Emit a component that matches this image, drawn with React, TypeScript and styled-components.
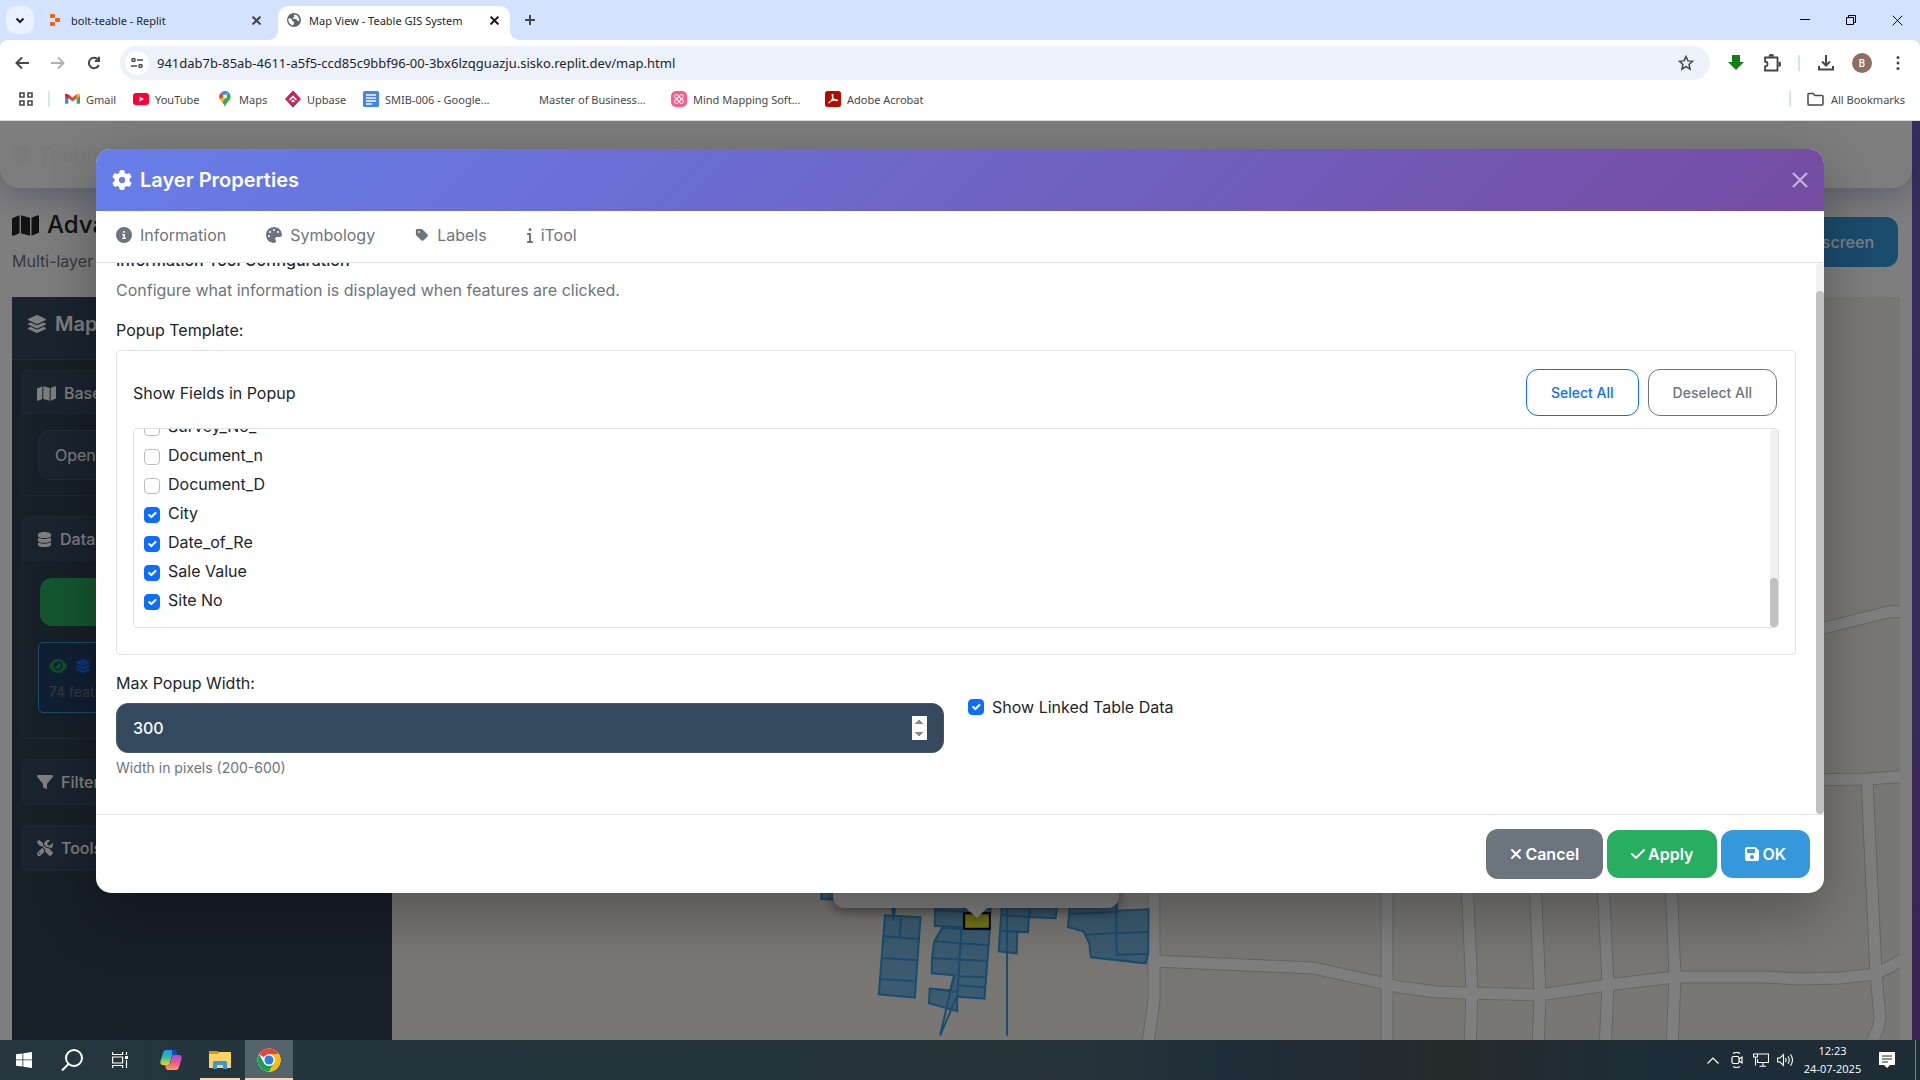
import React, { ReactNode, useLayoutEffect, useRef, useState } from "react";
import styled, { createGlobalStyle, css } from "styled-components";
import {
  FaCheck,
  FaCircleInfo,
  FaDatabase,
  FaEye,
  FaFilter,
  FaFloppyDisk,
  FaGear,
  FaInfo,
  FaLayerGroup,
  FaMap,
  FaPalette,
  FaScrewdriverWrench,
  FaTag,
  FaXmark,
} from "react-icons/fa6";

const uiFont = `"Noto Sans", "Open Sans", sans-serif`;
const appFont = `Inter, "Liberation Sans", sans-serif`;

const GlobalStyle = createGlobalStyle`
  *, *::before, *::after { box-sizing: border-box; }
  body { margin: 0; font-family: ${appFont}; font-size: 16px; color: #212529; overflow: hidden; }
  button, input, select { font: inherit; }
  button { cursor: pointer; }
  svg { display: block; flex: none; }
`;

/* ---------- window ---------- */

const Desktop = styled.div`
  display: flex;
  flex-direction: column;
  height: 100vh;
`;

const IconButton = styled.button<{ $w?: number; $h?: number; $bg?: string; $color?: string; $radius?: number }>`
  display: flex;
  align-items: center;
  justify-content: center;
  flex: none;
  width: ${(p) => p.$w ?? 24}px;
  height: ${(p) => p.$h ?? 24}px;
  padding: 0;
  border: 0;
  border-radius: ${(p) => p.$radius ?? 12}px;
  background: ${(p) => p.$bg ?? "transparent"};
  color: ${(p) => p.$color ?? "#474747"};
`;

/* ---------- browser tabs ---------- */

const TabStrip = styled.header`
  display: flex;
  align-items: center;
  height: 40px;
  flex: none;
  padding-left: 6px;
  background: #d3e3fd;
  font-family: ${uiFont};
  font-size: 11px;
`;

const BrowserTab = styled.div<{ $active?: boolean }>`
  position: relative;
  display: flex;
  align-items: center;
  gap: 8px;
  align-self: flex-end;
  height: 34px;
  width: 232px;
  margin-left: 6px;
  padding: 0 4px 6px 9px;
  border-radius: 10px 10px 0 0;
  color: #1f1f1f;
  ${(p) =>
    p.$active &&
    css`
      background: #fff;
      &::before,
      &::after {
        content: "";
        position: absolute;
        bottom: 0;
        width: 10px;
        height: 10px;
      }
      &::before {
        left: -10px;
        background: radial-gradient(circle at 0 0, transparent 10px, #fff 10px);
      }
      &::after {
        right: -10px;
        background: radial-gradient(circle at 100% 0, transparent 10px, #fff 10px);
      }
    `}
`;

const TabTitle = styled.span`
  flex: 1;
  white-space: nowrap;
`;

const WindowControls = styled.div`
  display: flex;
  margin-left: auto;
`;

const ToolbarWrap = styled.div`
  flex: none;
  background: #d3e3fd;
`;

const Toolbar = styled.div`
  display: flex;
  align-items: center;
  height: 46px;
  padding: 0 10px;
  background: #fff;
  border-radius: 8px 8px 0 0;
`;

const NavButtons = styled.div`
  display: flex;
  gap: 12px;
  margin-right: 14px;
`;

const Omnibox = styled.label`
  display: flex;
  align-items: center;
  flex: 1;
  gap: 8px;
  height: 34px;
  padding: 0 12px 0 5px;
  border-radius: 17px;
  background: #ecf1fa;
  font-family: ${uiFont};
`;

const UrlInput = styled.input`
  flex: 1;
  min-width: 0;
  padding: 0;
  border: 0;
  outline: 0;
  background: transparent;
  color: #1f1f1f;
  font-size: 13px;
`;

const Separator = styled.span`
  width: 2px;
  height: 16px;
  flex: none;
  background: #d3e3fd;
`;

const ToolbarActions = styled.div`
  display: flex;
  align-items: center;
  gap: 12px;
  margin-left: 14px;
  ${Separator} {
    margin: 0 2px;
  }
`;

const Avatar = styled.span`
  display: grid;
  place-items: center;
  width: 20px;
  height: 20px;
  border-radius: 50%;
  background: #8d6e63;
  color: #fff;
  font: 500 10px Roboto, sans-serif;
`;

const BookmarkBar = styled.nav`
  display: flex;
  align-items: center;
  height: 35px;
  flex: none;
  padding: 0 15px 8px 16px;
  background: #fff;
  border-bottom: 1px solid #dadce0;
  font-family: ${uiFont};
  font-size: 11px;
`;

const Bookmark = styled.a<{ $w?: number }>`
  display: flex;
  align-items: center;
  gap: 6px;
  width: ${(p) => (p.$w ? p.$w + "px" : "auto")};
  flex: none;
  color: #474747;
  text-decoration: none;
  white-space: nowrap;
`;

const BookmarkGroup = styled.div`
  display: flex;
  align-items: center;
  flex: 1;
  padding-left: 14px;
`;

const AllBookmarks = styled(Bookmark)`
  margin-left: 16px;
  gap: 7px;
`;

const IconSlot = styled.span`
  display: flex;
  justify-content: center;
  width: 16px;
  height: 16px;
`;

/* ---------- page under the dialog ---------- */

const Viewport = styled.main`
  position: relative;
  container-type: size;
  display: flex;
  flex: 1;
  min-height: 0;
  overflow: hidden;
  background: linear-gradient(135deg, #667eea, #764ba2);
`;

const Page = styled.div`
  display: flex;
  flex-direction: column;
  flex: 1;
  min-width: 0;
  margin-right: 8px;
  background: #fdfdfd;
`;

const SiteHeader = styled.div`
  display: flex;
  align-items: center;
  gap: 8px;
  height: 67px;
  flex: none;
  padding: 0 12px;
  border-radius: 0 0 20px 20px;
  background: #f9fbf9;
  box-shadow: 0 8px 32px rgba(31, 38, 135, 0.3);
  color: #f3f5f3;
  font-size: 20px;
  font-weight: 700;
`;

const PageHead = styled.div`
  display: flex;
  align-items: flex-start;
  justify-content: space-between;
  height: 109px;
  flex: none;
  padding: 22px 14px 0 12px;
`;

const PageTitle = styled.h1`
  display: flex;
  align-items: center;
  gap: 8px;
  margin: 0 0 8px;
  padding-top: 1px;
  font-size: 24px;
  line-height: 28px;
  font-weight: 500;
`;

const Lead = styled.p`
  margin: 0;
  color: #6c757d;
  line-height: 28px;
`;

const FullscreenButton = styled.button`
  margin-top: 7px;
  height: 50px;
  padding: 0 24px;
  border: 0;
  border-radius: 12px;
  background: #3498db;
  color: #fff;
  font-weight: 500;
`;

const Workspace = styled.div`
  display: flex;
  flex: 1;
  min-height: 0;
  padding: 0 12px;
`;

const Sidebar = styled.aside`
  width: 380px;
  flex: none;
  background: #2f3e50;
  color: #fff;
`;

const SidebarHead = styled.h2`
  display: flex;
  align-items: center;
  gap: 8px;
  height: 63px;
  margin: 0 0 10px;
  padding: 0 15px 8px;
  background: #34495e;
  border-bottom: 1px solid #44586b;
  font-size: 20px;
  font-weight: 600;
`;

const Card = styled.section`
  margin: 0 10px 20px;
  border: 1px solid #3f5060;
  border-radius: 5px;
`;

const CardHead = styled.h3`
  display: flex;
  align-items: center;
  gap: 8px;
  height: 44px;
  margin: 0;
  padding: 0 14px;
  background: #34495e;
  font-size: 16px;
  font-weight: 500;
`;

const CardBody = styled.div<{ $bottom?: number }>`
  display: flex;
  flex-direction: column;
  gap: 16px;
  padding: 15px 15px ${(p) => p.$bottom ?? 15}px;
`;

const LayerSelect = styled.select`
  appearance: none;
  height: 50px;
  padding: 0 16px;
  border: 1px solid #44586b;
  border-radius: 12px;
  background: #34495e;
  color: #fff;
`;

const AddButton = styled.button`
  height: 48px;
  margin: 2px 2px 0;
  border: 0;
  border-radius: 12px;
  background: #27ae60;
`;

const LayerItem = styled.div`
  height: 71px;
  padding: 14px 10px;
  border: 1px solid #3498db;
  border-radius: 5px;
  background: #223f66;
  color: #6c757d;
  font-size: 14px;
`;

const LayerIcons = styled.div`
  display: flex;
  align-items: center;
  gap: 8px;
  margin-bottom: 8px;
`;

const MapPane = styled.div`
  flex: 1;
  min-width: 0;
  overflow: hidden;
  background: #f2efe7;
`;

/* ---------- scroll area with its own slim bar ---------- */

const ScrollFrame = styled.div`
  display: flex;
  height: 100%;
`;

const ScrollContent = styled.div<{ $pad: string }>`
  flex: 1;
  min-width: 0;
  overflow-y: auto;
  scrollbar-width: none;
  padding: ${(p) => p.$pad};
`;

const ScrollTrack = styled.div`
  width: 8px;
  flex: none;
  border-radius: 4px;
  background: #f1f1f1;
`;

const ScrollThumb = styled.div`
  border-radius: 4px;
  background: #c1c1c1;
`;

const ScrollArea = ({ pad, children }: { pad: string; children: ReactNode }) => {
  const content = useRef<HTMLDivElement>(null);
  const [bar, setBar] = useState({ size: 100, top: 0 });

  const measure = () => {
    const el = content.current;
    if (!el) return;
    const scale = el.clientHeight / el.scrollHeight;
    setBar({ size: scale * el.clientHeight, top: el.scrollTop * scale });
  };

  useLayoutEffect(() => {
    const el = content.current;
    if (el) el.scrollTop = el.scrollHeight;
    measure();
  }, []);

  return (
    <ScrollFrame>
      <ScrollContent ref={content} $pad={pad} onScroll={measure}>{children}</ScrollContent>
      <ScrollTrack>
        <ScrollThumb style={{ height: bar.size, marginTop: bar.top }} />
      </ScrollTrack>
    </ScrollFrame>
  );
};

/* ---------- dialog ---------- */

const Backdrop = styled.div`
  position: absolute;
  inset: 0;
  padding-top: 28px;
  background: rgba(0, 0, 0, 0.5);
`;

const Modal = styled.div`
  width: 90%;
  margin: 0 auto;
  overflow: hidden;
  border-radius: 15px;
  background: #fff;
  box-shadow: 0 20px 60px rgba(0, 0, 0, 0.3);
`;

const ModalHead = styled.div`
  display: flex;
  align-items: center;
  justify-content: space-between;
  height: 62px;
  padding: 0 16px;
  background: linear-gradient(135deg, #667eea 0%, #764ba2 100%);
  color: #fff;
`;

const ModalTitle = styled.h2`
  display: flex;
  align-items: center;
  gap: 8px;
  margin: 0;
  font-size: 20px;
  font-weight: 600;
`;

const TabList = styled.div`
  display: flex;
  height: 52px;
  border-bottom: 1px solid #dee2e6;
`;

const PanelTab = styled.button`
  display: flex;
  align-items: center;
  gap: 8px;
  padding: 0 20px 4px;
  border: 0;
  background: none;
  color: #6c757d;
`;

const InfoGlyph = styled(FaInfo)`
  width: 6px;
  height: 16px;
`;

const ModalBody = styled.div`
  height: 60cqh;
`;

const SectionTitle = styled.h3`
  margin: 0 0 7px;
  font-size: 16px;
  line-height: 20px;
  font-weight: 500;
`;

const Hint = styled.p`
  margin: 0 0 15px;
  color: #6c757d;
  line-height: 26px;
`;

const FieldLabel = styled.label`
  display: block;
  margin-bottom: 8px;
  line-height: 24px;
`;

const FieldBox = styled.div`
  margin-bottom: 16px;
  padding: 18px 16px 26px;
  border: 1px solid #dee2e6;
  border-radius: 4px;
`;

const FieldBoxHead = styled.div`
  display: flex;
  align-items: center;
  gap: 9px;
  margin-bottom: 12px;
  padding-right: 2px;
`;

const FieldBoxTitle = styled.span`
  flex: 1;
`;

const OutlineButton = styled.button<{ $color: string }>`
  height: 47px;
  padding: 0 24px;
  border: 1px solid ${(p) => p.$color};
  border-radius: 12px;
  background: #fff;
  color: ${(p) => p.$color};
  font-size: 14px;
  font-weight: 500;
`;

const FieldList = styled.div`
  height: 200px;
  overflow: hidden;
  border: 1px solid #dee2e6;
  border-radius: 4px;
`;

const Spacer = styled.div<{ $rows: number }>`
  height: ${(p) => p.$rows * 29}px;
`;

const CheckRow = styled.label`
  display: flex;
  align-items: center;
  gap: 8px;
  height: 26px;
  margin-bottom: 3px;
`;

const Checkbox = styled.input.attrs({ type: "checkbox" })<{ $drop?: number }>`
  appearance: none;
  width: 16px;
  height: 16px;
  flex: none;
  margin: ${(p) => p.$drop ?? 0}px 0 0;
  border: 1px solid #b9bdc2;
  border-radius: 4px;
  background: #fff;
  &:checked {
    border-color: #0d6efd;
    background: #0d6efd
      url("data:image/svg+xml,%3csvg xmlns='http://www.w3.org/2000/svg' viewBox='0 0 20 20'%3e%3cpath fill='none' stroke='%23fff' stroke-linecap='round' stroke-linejoin='round' stroke-width='3' d='m6 10 3 3 6-6'/%3e%3c/svg%3e")
      center / contain no-repeat;
  }
`;

const Columns = styled.div`
  display: grid;
  grid-template-columns: 1fr 1fr;
  gap: 24px;
`;

const LinkedOption = styled.div`
  padding-top: 23px;
`;

const NumberInput = styled.input`
  display: block;
  width: 100%;
  height: 50px;
  padding: 0 16px;
  border: 1px solid #44586b;
  border-radius: 12px;
  background: #34495e;
  color: #fff;
  font-weight: 500;
  &::-webkit-inner-spin-button {
    opacity: 1;
    height: 24px;
  }
`;

const HelpText = styled.small`
  display: block;
  margin-top: 4px;
  color: #6c757d;
  font-size: 14px;
  line-height: 22px;
`;

const ModalFoot = styled.div`
  display: flex;
  align-items: center;
  justify-content: flex-end;
  gap: 4px;
  height: 79px;
  padding: 0 14px;
  border-top: 1px solid #dee2e6;
`;

const ActionButton = styled.button<{ $bg: string; $tall?: boolean; $icon: number }>`
  display: flex;
  align-items: center;
  gap: 3px;
  height: ${(p) => (p.$tall ? 50 : 48)}px;
  padding: 0 24px;
  border: 0;
  border-radius: 12px;
  background: ${(p) => p.$bg};
  color: #fff;
  font-weight: 600;
  svg {
    width: ${(p) => p.$icon}px;
    height: 16px;
  }
`;

/* ---------- taskbar ---------- */

const Taskbar = styled.footer`
  display: flex;
  align-items: center;
  height: 40px;
  flex: none;
  background: linear-gradient(90deg, #25363f 0%, #23343c 25%, #28343a 55%, #1f2d38 64%, #262a2c 76%, #1d2d37 86%, #1d2c35 100%);
  color: #fff;
`;

const TaskButton = styled.button<{ $open?: boolean; $current?: boolean }>`
  display: flex;
  align-items: center;
  justify-content: center;
  width: ${(p) => (p.$open ? 40 : 48)}px;
  height: 40px;
  margin: 0 ${(p) => (p.$open ? 5 : 0)}px;
  padding: 2px 0 0;
  border: 0;
  border-bottom: 2px solid ${(p) => (p.$open || p.$current ? "#fcd7ab" : "transparent")};
  background: ${(p) => (p.$current ? "#53626b" : "transparent")};
`;

const PinnedApps = styled.div`
  display: flex;
  margin-left: 3px;
`;

const Tray = styled.div`
  display: flex;
  align-items: center;
  margin-left: auto;
  height: 40px;
`;

const Clock = styled.time`
  width: 74px;
  padding-right: 3px;
  text-align: center;
  font-family: "Open Sans", sans-serif;
  font-size: 11px;
  line-height: 18px;
`;

const ShowDesktop = styled.span`
  width: 5px;
  height: 40px;
  margin-left: 12px;
  border-left: 1px solid #77828a;
`;

/* ---------- drawings ---------- */

const stroke = { fill: "none", stroke: "currentColor", strokeWidth: 2 } as const;

const Cross = ({ size = 8, width = 2 }) => (
  <svg width={size} height={size} viewBox="0 0 16 16" fill="none" stroke="currentColor" strokeWidth={(width * 16) / size}>
    <path d="M1 1 15 15M15 1 1 15" />
  </svg>
);

const ReplitLogo = () => (
  <svg width="14" height="14" viewBox="0 0 14 14" fill="#f26207">
    <rect x="1" y="1" width="5" height="4" rx="1" />
    <rect x="6" y="5" width="5" height="4" rx="1" />
    <rect x="1" y="9" width="5" height="4" rx="1" />
  </svg>
);

const Globe = () => (
  <svg width="14" height="14" viewBox="0 0 14 14">
    <circle cx="7" cy="7" r="7" fill="#5f6368" />
    <path d="M1.6 5.2c2-.2 3.400.8 3.400 2 0 1.200 1.600.8 2 2 .3 1-.6 1.400-.6 3.200A5.600 5.600 0 0 1 1.600 5.200zM7 1.600c-.6 1.200 1 1.600 0 2.600-.8.8-2 .4-1.200 1.400.8.9 3.600.2 4.200 1.400.5 1 1 1.400 2.300 1A5.600 5.600 0 0 0 7 1.600z" fill="#fff" />
  </svg>
);

const ChromeLogo = () => (
  <svg width="24" height="24" viewBox="0 0 48 48">
    <circle cx="24" cy="24" r="23" fill="#fff" />
    <path d="M24 1A23 23 0 0 1 44 12.500H24a11.500 11.500 0 0 0-10 5.800L4.100 12.500A23 23 0 0 1 24 1z" fill="#ea4335" />
    <path d="M44 12.500A23 23 0 0 1 23.500 47L34 29.800a11.500 11.500 0 0 0 0-11.600 11 11 0 0 0-10-5.700z" fill="#fbbc04" />
    <path d="M4.100 12.500 14 29.800a11.500 11.500 0 0 0 20 0L23.700 47A23 23 0 0 1 4.100 12.500z" fill="#1e9e4a" />
    <circle cx="24" cy="24" r="11.500" fill="#fff" />
    <circle cx="24" cy="24" r="9" fill="#2b7de9" />
  </svg>
);

const roads = [
  "M1154 880V1000L1147 1050",
  "M1154 961 1313 968 1382 983 1400 987 1437 992 1466 993 1540 995 1607 985 1675 977 1765 977 1800 979 1840 978 1876 974 1910 956",
  "M1387 880V1050",
  "M1467 880 1472 992 1470 1050",
  "M1535 880 1540 994 1538 1050",
  "M1603 880 1608 985 1605 1050",
  "M1671 880 1675 977 1672 1050",
  "M1800 780 1867 779 1910 776",
  "M1867 779 1876 974 1880 1018Q1880 1026 1872 1042",
  "M1800 634 1888 612 1910 611",
];

const parcels = [
  "M56 700H120V780L56 777Z",
  "M222 826 315 832 300 1073 206 1063Z",
  "M220 889 308 897M216 954 306 961M211 1017 302 1024M264 832 261 892",
  "M240 790 249 790 245 842Z",
  "M353 790H429L427 862 352 858Z",
  "M353 810 427 815",
  "M371 864 496 870 482 1076 411 1070 411 1114 337 1090 339 1046 392 1051 403 1006 344 1000 345 952 351 904Z",
  "M351 904 492 916M345 954 488 963M412 1009 485 1012M410 1036 484 1042M422 864 411 1070M339 1046 411 1056M403 1006 366 1187 413 1060",
  "M429 790H498V818H429Z",
  "M528 790H672L668 835 598 831 596 877 568 875 566 940 519 934Z",
  "M526 825 598 831M600 790V829M525 872 568 875M541 790V1187",
  "M706 790H827V812L911 808 910 940 903 970 760 952 756 910 741 874 700 861Z",
  "M707 822 827 816M749 884 827 879 910 876M827 790V944L908 941",
];

const MapDrawing = () => (
  <svg width="100%" height="100%" viewBox="392 297 1508 743" preserveAspectRatio="xMinYMin slice">
    <defs>
      <filter id="popupShadow" x="-20%" y="-20%" width="140%" height="140%">
        <feDropShadow dx="0" dy="3" stdDeviation="6" floodOpacity="0.45" />
      </filter>
    </defs>
    <g fill="none" stroke="#cbc9c4" strokeWidth="13">
      {roads.map((d) => <path key={d} d={d} />)}
    </g>
    <g fill="none" stroke="#fff" strokeWidth="11">
      {roads.map((d) => <path key={d} d={d} />)}
    </g>
    <g transform="translate(800 640) scale(.3827 .3333)" fill="#3498db" stroke="#3498db" strokeWidth="2">
      {parcels.map((d) => <path key={d} d={d} vectorEffect="non-scaling-stroke" fillOpacity={d.endsWith("Z") ? 0.65 : 0} />)}
      <path d="M429 820H496V866H429Z" fill="#f0f030" stroke="#000" vectorEffect="non-scaling-stroke" />
    </g>
    <g fill="#fff" filter="url(#popupShadow)">
      <rect x="833" y="700" width="286" height="208" rx="12" />
      <path d="M965 907H988L977 918Z" />
    </g>
  </svg>
);

/* ---------- sections ---------- */

const BrowserChrome = () => (
  <>
    <TabStrip>
      <IconButton $w={28} $h={28} $bg="#e9f1fe" $radius={10} aria-label="Search tabs" $color="#1f1f1f">
        <svg width="10" height="10" viewBox="0 0 10 10" {...stroke}><path d="m1.500 3.500 3.500 3.500 3.500-3.500" /></svg>
      </IconButton>
      <BrowserTab>
        <ReplitLogo />
        <TabTitle>bolt-teable - Replit</TabTitle>
        <IconButton aria-label="Close tab"><Cross size={9} /></IconButton>
      </BrowserTab>
      <BrowserTab $active>
        <Globe />
        <TabTitle>Map View - Teable GIS System</TabTitle>
        <IconButton aria-label="Close tab" $color="#1f1f1f"><Cross size={9} /></IconButton>
      </BrowserTab>
      <IconButton $w={40} aria-label="New tab">
        <svg width="12" height="12" viewBox="0 0 12 12" {...stroke}><path d="M6 1v10M1 6h10" /></svg>
      </IconButton>
      <WindowControls>
        <IconButton $w={46} $h={40} $radius={0} $color="#000" aria-label="Minimize">
          <svg width="10" height="10" viewBox="0 0 10 10" stroke="currentColor"><path d="M0 4.500h10" /></svg>
        </IconButton>
        <IconButton $w={46} $h={40} $radius={0} $color="#000" aria-label="Restore">
          <svg width="10" height="10" viewBox="0 0 10 10" fill="none" stroke="currentColor"><path d="M.5 2.500h7v7h-7zM2.500 2.500v-2h7v7h-2" /></svg>
        </IconButton>
        <IconButton $w={46} $h={40} $radius={0} $color="#000" aria-label="Close"><Cross size={11} width={1} /></IconButton>
      </WindowControls>
    </TabStrip>
    <ToolbarWrap>
      <Toolbar>
        <NavButtons>
          <IconButton aria-label="Back">
            <svg width="14" height="14" viewBox="0 0 14 14" {...stroke}><path d="M14 7H2M7 1.500 1.500 7 7 12.500" /></svg>
          </IconButton>
          <IconButton aria-label="Forward" $color="#b0b0b0">
            <svg width="14" height="14" viewBox="0 0 14 14" {...stroke}><path d="M0 7h12M7 1.500 12.500 7 7 12.500" /></svg>
          </IconButton>
          <IconButton aria-label="Reload">
            <svg width="14" height="14" viewBox="0 0 14 14" {...stroke}><path d="M11.800 9A5.200 5.200 0 1 1 11 3.600M12 .8v4.200H7.800" /></svg>
          </IconButton>
        </NavButtons>
        <Omnibox>
          <IconButton $bg="#fff" aria-label="Site information">
            <svg width="12" height="12" viewBox="0 0 12 12" fill="none" stroke="currentColor" strokeWidth="1.500"><circle cx="2.500" cy="3" r="1.600" /><path d="M6 3h6M0 9h6" /><circle cx="9.500" cy="9" r="1.600" /></svg>
          </IconButton>
          <UrlInput aria-label="Address" defaultValue="941dab7b-85ab-4611-a5f5-ccd85c9bbf96-00-3bx6lzqguazju.sisko.replit.dev/map.html" />
          <IconButton aria-label="Bookmark this page">
            <svg width="16" height="16" viewBox="0 0 16 16" fill="none" stroke="currentColor" strokeWidth="1.500"><path d="m8 1.500 1.900 4.400 4.700.4-3.600 3.100 1.100 4.700L8 11.600l-4.100 2.500L5 9.400 1.400 6.300l4.700-.4z" /></svg>
          </IconButton>
        </Omnibox>
        <ToolbarActions>
          <IconButton aria-label="Download manager">
            <svg width="16" height="16" viewBox="0 0 16 16" fill="#128012"><path d="M4 0h8v7h4l-8 8-8-8h4z" /></svg>
          </IconButton>
          <IconButton aria-label="Extensions">
            <svg width="18" height="18" viewBox="0 0 18 18" fill="none" stroke="currentColor" strokeWidth="1.800"><path d="M2 3.500h12.500v13H2v-4a2.400 2.400 0 0 0 0-5z" /><path d="M6.500 2.500a1.800 1.800 0 0 1 3.600 0M15.500 8.500a1.800 1.800 0 0 1 0 3.600" fill="currentColor" /></svg>
          </IconButton>
          <Separator />
          <IconButton aria-label="Downloads">
            <svg width="16" height="16" viewBox="0 0 16 16" {...stroke}><path d="M8 0v10M4 6.500l4 4 4-4M1 11v3.500h14V11" /></svg>
          </IconButton>
          <IconButton aria-label="Profile"><Avatar>B</Avatar></IconButton>
          <IconButton aria-label="Menu">
            <svg width="4" height="16" viewBox="0 0 4 16" fill="currentColor"><circle cx="2" cy="2.500" r="1.500" /><circle cx="2" cy="8" r="1.500" /><circle cx="2" cy="13.500" r="1.500" /></svg>
          </IconButton>
        </ToolbarActions>
      </Toolbar>
    </ToolbarWrap>
    <BookmarkBar>
      <Bookmark href="#" aria-label="Apps" $w={32}>
        <svg width="20" height="16" viewBox="0 0 20 16" fill="none" stroke="currentColor" strokeWidth="1.600"><path d="M4 2h4v4H4zM12 2h4v4h-4zM4 10h4v4H4zM12 10h4v4h-4z" /></svg>
      </Bookmark>
      <Separator />
      <BookmarkGroup>
        <Bookmark href="#" $w={69}>
          <IconSlot><svg width="15" height="16" viewBox="0 0 16 16"><path d="M0 4v9h3.500V7z" fill="#4285f4" /><path d="M16 4v9h-3.500V7z" fill="#34a853" /><path d="M0 4.500 3.500 2.800 8 6.400l4.500-3.600L16 4.500 8 10.500z" fill="#ea4335" /><path d="M0 4.500A1.500 1.500 0 0 1 2 2.500L3.500 4v4z" fill="#c5221f" /><path d="M16 4.500a1.500 1.500 0 0 0-2-2L12.500 4v4z" fill="#fbbc04" /></svg></IconSlot>
          Gmail
        </Bookmark>
        <Bookmark href="#" $w={84}>
          <IconSlot><svg width="16" height="16" viewBox="0 0 16 16"><rect y="2" width="16" height="12" rx="3" fill="#ff0033" /><path d="m6.500 5.500 4.500 2.500-4.500 2.500z" fill="#fff" /></svg></IconSlot>
          YouTube
        </Bookmark>
        <Bookmark href="#" $w={68}>
          <IconSlot><svg width="12" height="16" viewBox="0 0 12 16"><path d="M6 0A5.600 5.600 0 0 0 1.600 2L6 5.500 9.500 1.300A5.600 5.600 0 0 0 6 0z" fill="#4285f4" /><path d="M1.600 2A5.600 5.600 0 0 0 .8 8.300L6 5.500z" fill="#ea4335" /><path d="M.8 8.300C1.400 9.500 2.500 10.600 3.400 11.800L9.800 4 6 5z" fill="#fbbc04" /><path d="M9.500 1.300A5.600 5.600 0 0 1 11.600 5.600C11.600 10 7.400 10.500 6 16c-.6-1.800-1.200-2.800-2.600-4.200z" fill="#34a853" /><circle cx="6" cy="5.600" r="2" fill="#fff" /></svg></IconSlot>
          Maps
        </Bookmark>
        <Bookmark href="#" $w={78}>
          <IconSlot><svg width="16" height="16" viewBox="0 0 16 16"><path d="m8 0 7.500 8L8 16 .5 8z" fill="#c2255c" stroke="#c2255c" strokeLinejoin="round" /><path d="M4.500 9 8 5.500 11.500 9M6.500 11 8 9.500 9.500 11" fill="none" stroke="#fff" strokeWidth="1.600" /></svg></IconSlot>
          Upbase
        </Bookmark>
        <Bookmark href="#" $w={176}>
          <IconSlot><svg width="16" height="16" viewBox="0 0 16 16"><rect width="16" height="16" rx="1.500" fill="#4285f4" /><path d="M3 4h10M3 7h10M3 10h10M3 13h6" stroke="#fff" strokeWidth="1.500" /></svg></IconSlot>
          SMIB-006 - Google...
        </Bookmark>
        <Bookmark href="#" $w={132}>Master of Business...</Bookmark>
        <Bookmark href="#" $w={154}>
          <IconSlot><svg width="16" height="16" viewBox="0 0 16 16"><rect width="16" height="16" rx="5" fill="#ff5a8c" /><g fill="none" stroke="#fff"><circle cx="8" cy="8" r="2.200" /><circle cx="5.500" cy="5.500" r="2" /><circle cx="10.500" cy="5.500" r="2" /><circle cx="5.500" cy="10.500" r="2" /><circle cx="10.500" cy="10.500" r="2" /></g></svg></IconSlot>
          Mind Mapping Soft...
        </Bookmark>
        <Bookmark href="#">
          <IconSlot><svg width="16" height="16" viewBox="0 0 16 16"><rect width="16" height="16" rx="2.500" fill="#b30b00" /><path d="M3.500 12C6 11 8.500 7 8 4c-.6-1.500-1.600.3 0 3 1.500 2.500 3.500 3 4.600 2.400C12 8 7 8.500 3.500 12z" fill="none" stroke="#fff" strokeWidth="1.100" /></svg></IconSlot>
          Adobe Acrobat
        </Bookmark>
      </BookmarkGroup>
      <Separator />
      <AllBookmarks href="#">
        <svg width="17" height="14" viewBox="0 0 17 14" fill="none" stroke="currentColor" strokeWidth="1.500"><path d="M1 2.500A1 1 0 0 1 2 1.500h4l2 2h7a1 1 0 0 1 1 1V12a1 1 0 0 1-1 1H2a1 1 0 0 1-1-1z" /></svg>
        All Bookmarks
      </AllBookmarks>
    </BookmarkBar>
  </>
);

const GisPage = () => (
  <Page>
    <SiteHeader><FaDatabase size={18} /> Teable</SiteHeader>
    <PageHead>
      <div>
        <PageTitle><FaMap size={27} /> Advanced</PageTitle>
        <Lead>Multi-layer</Lead>
      </div>
      <FullscreenButton>Fullscreen</FullscreenButton>
    </PageHead>
    <Workspace>
      <Sidebar>
        <SidebarHead><FaLayerGroup size={20} /> Map</SidebarHead>
        <Card>
          <CardHead><FaMap size={19} /> Base</CardHead>
          <CardBody>
            <LayerSelect aria-label="Base map"><option>OpenStreetMap</option></LayerSelect>
          </CardBody>
        </Card>
        <Card>
          <CardHead><FaDatabase size={15} /> Data</CardHead>
          <CardBody $bottom={25}>
            <AddButton aria-label="Add layer" />
            <LayerItem>
              <LayerIcons><FaEye size={18} color="#1f9d55" /><FaLayerGroup size={16} color="#0d6efd" /></LayerIcons>
              74 features
            </LayerItem>
          </CardBody>
        </Card>
        <Card><CardHead><FaFilter size={16} /> Filters</CardHead></Card>
        <Card><CardHead><FaScrewdriverWrench size={16} /> Tools</CardHead></Card>
      </Sidebar>
      <MapPane><MapDrawing /></MapPane>
    </Workspace>
  </Page>
);

const ROWS_ABOVE = 20;
const fields = [
  { name: "Survey_No_", shown: false },
  { name: "Document_n", shown: false },
  { name: "Document_D", shown: false },
  { name: "City", shown: true },
  { name: "Date_of_Re", shown: true },
  { name: "Sale Value", shown: true },
  { name: "Site No", shown: true },
];

const LayerDialog = () => (
  <Backdrop>
    <Modal role="dialog" aria-labelledby="dialogTitle">
      <ModalHead>
        <ModalTitle id="dialogTitle"><FaGear size={20} /> Layer Properties</ModalTitle>
        <IconButton $w={16} $h={16} $radius={0} $color="rgba(255,255,255,.6)" aria-label="Close dialog"><Cross size={16} width={2} /></IconButton>
      </ModalHead>
      <TabList role="tablist">
        <PanelTab role="tab"><FaCircleInfo size={16} /> Information</PanelTab>
        <PanelTab role="tab"><FaPalette size={16} /> Symbology</PanelTab>
        <PanelTab role="tab"><FaTag size={14} /> Labels</PanelTab>
        <PanelTab role="tab"><InfoGlyph viewBox="16 0 160 512" /> iTool</PanelTab>
      </TabList>
      <ModalBody>
        <ScrollArea pad="16px 20px 35px">
          <SectionTitle>Information Tool Configuration</SectionTitle>
          <Hint>Configure what information is displayed when features are clicked.</Hint>
          <FieldLabel as="div">Popup Template:</FieldLabel>
          <FieldBox>
            <FieldBoxHead>
              <FieldBoxTitle>Show Fields in Popup</FieldBoxTitle>
              <OutlineButton $color="#0d6efd">Select All</OutlineButton>
              <OutlineButton $color="#6c757d">Deselect All</OutlineButton>
            </FieldBoxHead>
            <FieldList>
              <ScrollArea pad="10px 10px 11px">
                <Spacer $rows={ROWS_ABOVE} />
                {fields.map((f) => (
                  <CheckRow key={f.name}>
                    <Checkbox $drop={4} defaultChecked={f.shown} />
                    {f.name}
                  </CheckRow>
                ))}
              </ScrollArea>
            </FieldList>
          </FieldBox>
          <Columns>
            <div>
              <FieldLabel htmlFor="maxWidth">Max Popup Width:</FieldLabel>
              <NumberInput id="maxWidth" type="number" min={200} max={600} defaultValue={300} />
              <HelpText>Width in pixels (200-600)</HelpText>
            </div>
            <LinkedOption>
              <CheckRow><Checkbox defaultChecked /> Show Linked Table Data</CheckRow>
            </LinkedOption>
          </Columns>
        </ScrollArea>
      </ModalBody>
      <ModalFoot>
        <ActionButton $bg="#6c757d" $tall $icon={12}><FaXmark /> Cancel</ActionButton>
        <ActionButton $bg="#27ae60" $icon={14}><FaCheck /> Apply</ActionButton>
        <ActionButton $bg="#3498db" $icon={14}><FaFloppyDisk /> OK</ActionButton>
      </ModalFoot>
    </Modal>
  </Backdrop>
);

const WindowsTaskbar = () => (
  <Taskbar>
    <TaskButton aria-label="Start">
      <svg width="16" height="16" viewBox="0 0 16 16" fill="#fff"><path d="M0 2.300 6.500 1.400v6.100H0zM7.300 1.300 16 0v7.500H7.300zM0 8.300h6.500v6.300L0 13.700zM7.300 8.300H16V16l-8.700-1.200z" /></svg>
    </TaskButton>
    <TaskButton aria-label="Search">
      <svg width="22" height="22" viewBox="0 0 22 22" fill="none" stroke="#fff" strokeWidth="2"><circle cx="13" cy="9" r="8" /><path d="m7.500 15-6.500 6.500" /></svg>
    </TaskButton>
    <TaskButton aria-label="Task view">
      <svg width="16" height="16" viewBox="0 0 16 16" fill="none" stroke="#fff" strokeWidth="1.200"><path d="M.6 0v2.500h10V0M.6 16v-2.500h10V16M.6 5h10v6H.6zM14.500 0v3M14.500 8v8" /><path d="M13 4h3v3h-3z" fill="#fff" stroke="none" /></svg>
    </TaskButton>
    <PinnedApps>
      <TaskButton aria-label="Copilot">
        <svg width="22" height="20" viewBox="0 0 22 20">
          <defs>
            <linearGradient id="cpA" x2="0" y2="1"><stop stopColor="#1a9bf0" /><stop offset=".5" stopColor="#2fc0a0" /><stop offset="1" stopColor="#f5d020" /></linearGradient>
            <linearGradient id="cpB" x2="0" y2="1"><stop stopColor="#a24be8" /><stop offset=".5" stopColor="#f0568f" /><stop offset="1" stopColor="#ffa15a" /></linearGradient>
          </defs>
          <path d="M6 0h8c1.500 0 2 1 2.500 3l.5 2h-3c-1.500 0-2 .8-2.500 2.500L10 13c-.5 1.500-1 2-2.500 2H3C.5 15 0 13 .5 11L3 3C3.500 1 4.300 0 6 0z" fill="url(#cpA)" />
          <path d="M12 0h2c1.500 0 2 1 2.500 3l.5 2h-3c-1 0-1.800.5-2.200 1.500z" fill="#1247c9" />
          <path d="M16 20H8c-1.500 0-2-1-2.500-3L5 15h3c1.500 0 2-.8 2.500-2.500L12 7c.5-1.500 1-2 2.500-2H19c2.500 0 3 2 2.500 4L19 17c-.5 2-1.300 3-3 3z" fill="url(#cpB)" />
        </svg>
      </TaskButton>
      <TaskButton $open aria-label="File Explorer">
        <svg width="22" height="18" viewBox="0 0 22 18"><path d="M0 0h9l2 2.500H0z" fill="#d9970a" /><path d="M0 2.500h9L10.500 1H21a1 1 0 0 1 1 1v15H0z" fill="#fdd365" /><path d="M4 18v-6.500A1.500 1.500 0 0 1 5.500 10h11a1.500 1.500 0 0 1 1.500 1.500V18h-4v-4H8v4z" fill="#3a96dd" /></svg>
      </TaskButton>
      <TaskButton $current aria-label="Chrome"><ChromeLogo /></TaskButton>
    </PinnedApps>
    <Tray>
      <IconButton $color="#fff" aria-label="Show hidden icons"><svg width="12" height="7" viewBox="0 0 12 7" fill="none" stroke="currentColor" strokeWidth="1.200"><path d="m.5 6.500 5.500-5.500 5.500 5.500" /></svg></IconButton>
      <IconButton $color="#fff" aria-label="Meet now"><svg width="12" height="16" viewBox="0 0 12 16" fill="none" stroke="currentColor" strokeWidth="1.200"><rect x="1" y="4.500" width="7" height="7" rx="1.500" /><path d="m8 7 3-2v6l-3-2M2 1.500Q5.500-.5 9 1.500M2 14.500q3.500 2 7 0" /></svg></IconButton>
      <IconButton $color="#fff" aria-label="Network"><svg width="16" height="14" viewBox="0 0 16 14" fill="none" stroke="currentColor" strokeWidth="1.100"><path d="M5 1h10.500v8.500h-11V6M10 9.500V13M6.500 13.300H13M.5 1h4v3h-4zM2.500 4v8.500" /></svg></IconButton>
      <IconButton $color="#fff" aria-label="Volume"><svg width="17" height="14" viewBox="0 0 17 14" fill="none" stroke="currentColor" strokeWidth="1.100"><path d="M.6 5h2.500L6.500 1.500v11L3.100 9H.6zM8.500 5q1.200 2 0 4M11 3.200q2.500 3.800 0 7.600M13.500 1.200q4 5.800 0 11.600" /></svg></IconButton>
      <Clock>12:23<br />24-07-2025</Clock>
      <IconButton $w={32} $color="#fff" aria-label="Notifications"><svg width="16" height="16" viewBox="0 0 16 16"><path d="M0 0h16v13h-5l-3 3-3-3H0z" fill="#fff" /><path d="M3 4h10M3 7h10M3 10h6" stroke="#1d2c35" /></svg></IconButton>
      <ShowDesktop />
    </Tray>
  </Taskbar>
);

export default function App() {
  return (
    <Desktop>
      <GlobalStyle />
      <BrowserChrome />
      <Viewport>
        <GisPage />
        <LayerDialog />
      </Viewport>
      <WindowsTaskbar />
    </Desktop>
  );
}
